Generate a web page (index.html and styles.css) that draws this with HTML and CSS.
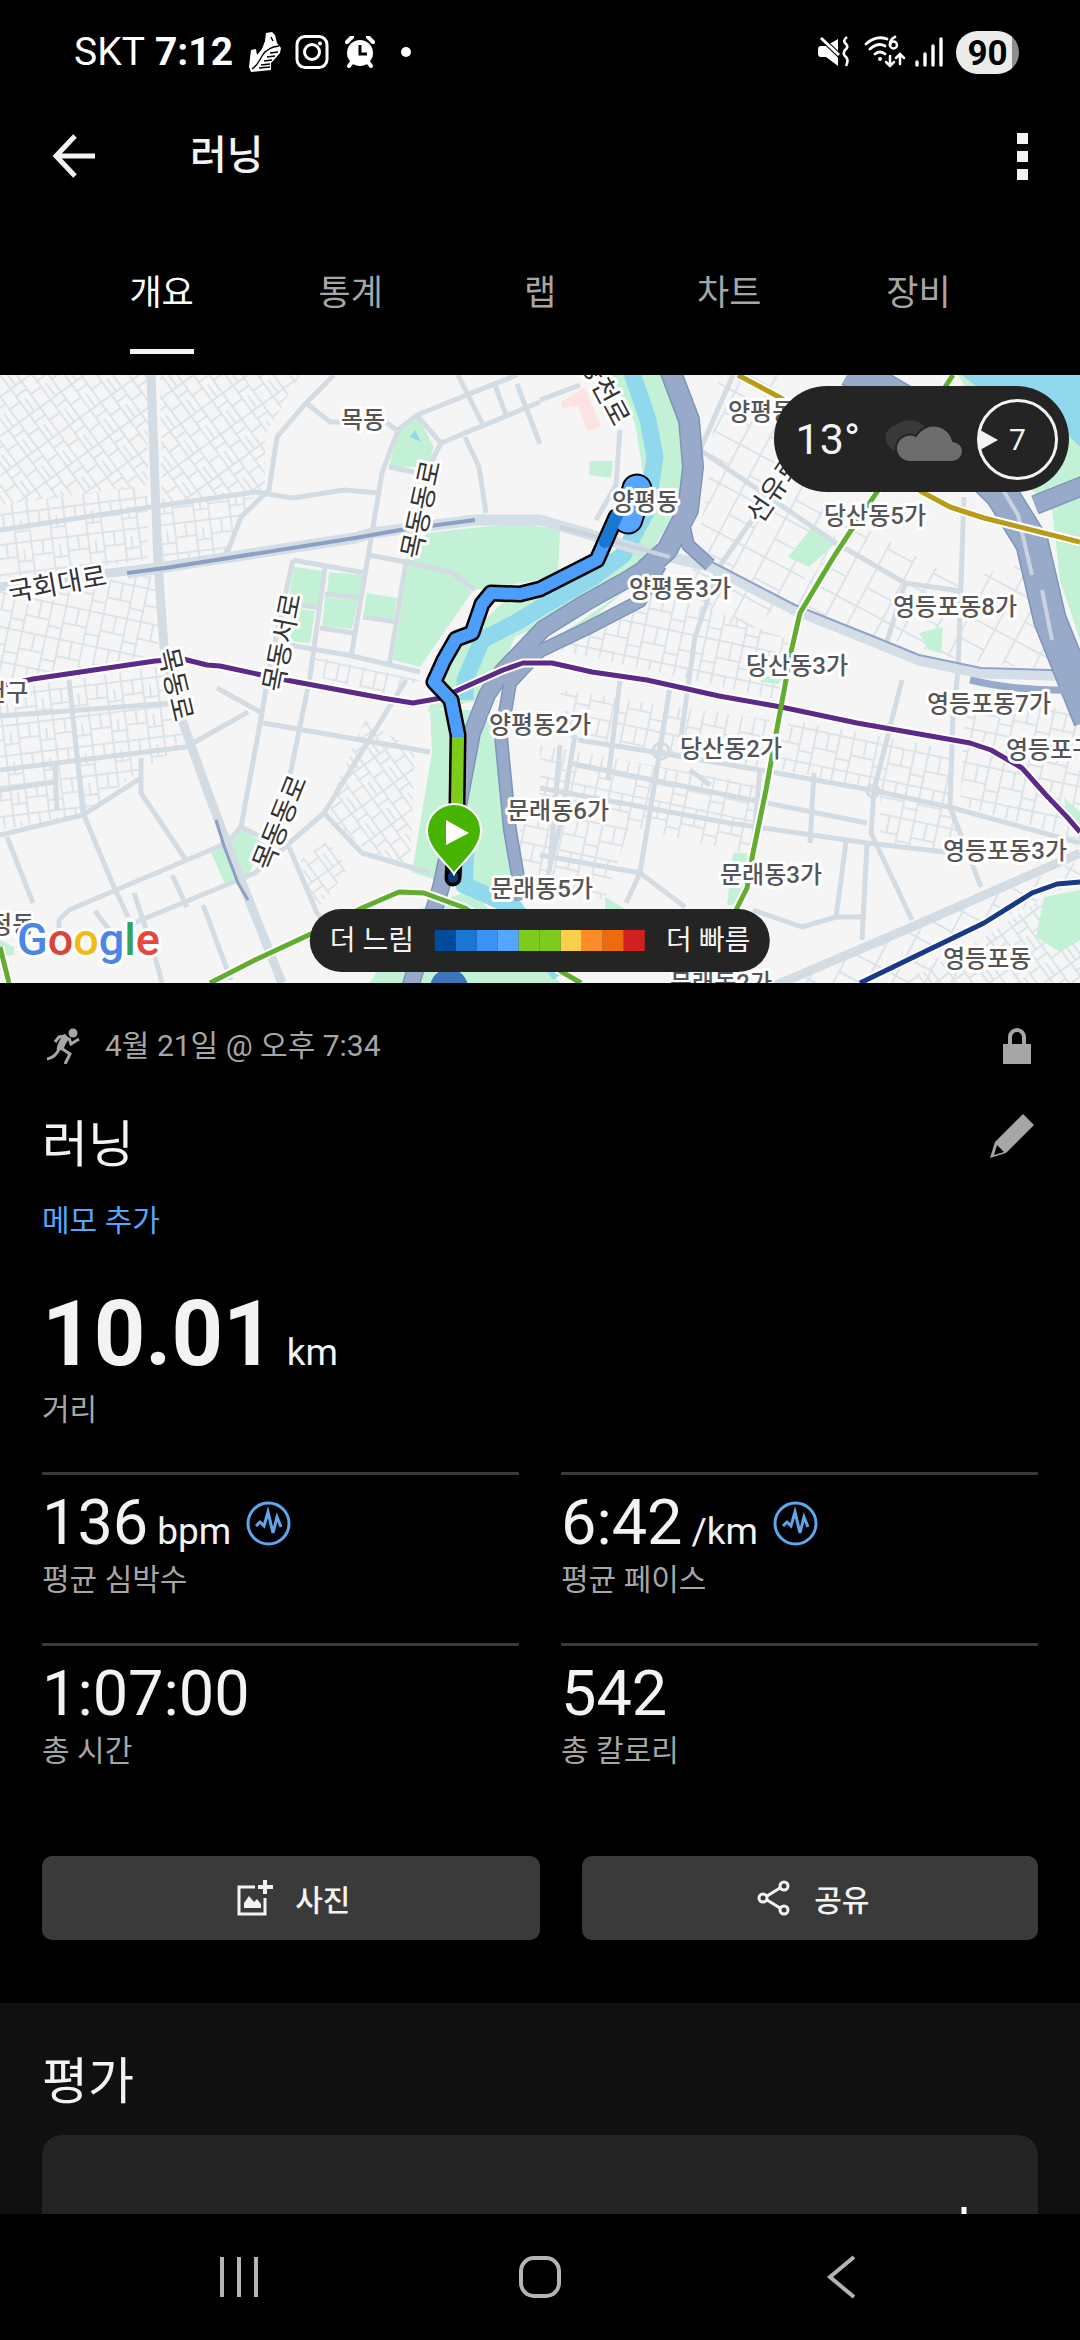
FILE: index.html
```html
<!DOCTYPE html>
<html lang="ko">
<head>
  <meta charset="UTF-8">
  <meta name="viewport" content="width=device-width, initial-scale=1.0">
  <title>러닝</title>

  <link rel="stylesheet" href="styles.css">
</head>
<body>
  <div class="screen">
    <div class="status">
      <div class="status-left">
        <span>SKT</span>
        <b>7:12</b>
        <svg class="status-shoe" width="32" height="40" viewBox="0 0 32 40" fill="#fff">
          <path d="M17 1l6-1 3 3 2 8 4 5-1 5-7 8-2 2v7L2 40 0 35l1-9 1-8 5-1 1 6 5-6 3-8z"/>
          <path d="M3 37c6-4 7-8 10-13s7-9 17-10M21 21l8-1M18 25l8-1M15 29l8-1M12 33l9-1M10 36l11-1M22 5l2 4" fill="none" stroke="#000" stroke-width="1.4"/>
        </svg>
        <svg class="status-insta" width="34" height="36" viewBox="0 0 34 36" fill="none" stroke="#fff" stroke-width="3">
          <rect x="2" y="2.500" width="30" height="31" rx="8"/>
          <circle cx="17" cy="18" r="7.500"/>
          <circle cx="25" cy="9.500" r="2" fill="#fff" stroke="none"/>
        </svg>
        <svg class="status-alarm" width="30" height="32" viewBox="0 0 30 32">
          <circle cx="15" cy="17" r="13" fill="#fff"/>
          <path d="M2 6l5-5M28 6l-5-5M7 26l-3 4M23 26l3 4" stroke="#fff" stroke-width="4" stroke-linecap="round"/>
          <path d="M15 9v9h7" fill="none" stroke="#000" stroke-width="3"/>
        </svg>
        <i class="status-dot"></i>
      </div>
      <div class="status-right">
        <svg width="32" height="32" viewBox="0 0 32 32">
          <path d="M2 10h6L20 3v27L8 21H2q-2-1-2-3v-5q0-2 2-3z" fill="#fff"/>
          <path d="M1 0l23 22" stroke="#000" stroke-width="5"/>
          <path d="M3 2l18 17" stroke="#fff" stroke-width="3"/>
          <path d="M29 1q-5 4-1 7 3 3-1 6-3 4 1 7 3 3 0 9" fill="none" stroke="#fff" stroke-width="2.600"/>
        </svg>
        <svg class="status-wifi" width="42" height="34" viewBox="0 0 42 34" fill="none" stroke="#fff" stroke-width="2.800" stroke-linecap="round">
          <path d="M2 9Q12 0 23 4M6 14Q14 7 21 11M11 19q5-4 10 0"/>
          <circle cx="16" cy="24" r="2" fill="#fff" stroke="none"/>
          <path d="M31 2q-5 2-5 8" />
          <circle cx="29.500" cy="10" r="3.500" stroke-width="2.500"/>
          <path d="M26 21v9m-4-3l4 4 4-4M36 29v-9m-4 3l4-4 4 4" stroke-width="2.500"/>
        </svg>
        <svg width="30" height="32" viewBox="0 0 30 32" stroke="#fff" stroke-width="3.400" stroke-linecap="round">
          <path d="M3 26v3M11 18v11M19 10v19M27 3v26"/>
        </svg>
        <span class="battery">90</span>
      </div>
    </div>

    <header class="appbar">
      <button class="icon-btn" aria-label="뒤로">
        <svg width="44" height="44" viewBox="0 0 44 44" fill="none" stroke="#f3f3f3" stroke-width="5">
          <path d="M43 22H5M23 2L4 22l19 20"/>
        </svg>
      </button>
      <h1 class="appbar-title">러닝</h1>
      <button class="icon-btn more" aria-label="더보기"><i></i><i></i><i></i></button>
    </header>

    <nav class="tabs">
      <a class="tab active" href="#overview">개요</a>
      <a class="tab" href="#stats">통계</a>
      <a class="tab" href="#laps">랩</a>
      <a class="tab" href="#charts">차트</a>
      <a class="tab" href="#gear">장비</a>
    </nav>

    <main class="content" id="overview">
      <section class="map">
        <svg class="map-canvas" viewBox="0 375 1080 608" preserveAspectRatio="xMidYMid slice">
          <defs>
            <pattern id="blocksA" width="26" height="32" patternUnits="userSpaceOnUse" patternTransform="rotate(-36)">
              <path d="M0 1h26M0 17h14M1 0v32M14 1v31M14 10h12M20 17v15" class="lane"/>
            </pattern>
            <pattern id="blocksB" width="36" height="30" patternUnits="userSpaceOnUse" patternTransform="rotate(-7)">
              <path d="M0 1h36M0 15h22M1 0v30M12 1v14M22 1v29M22 20h14M29 8v12" class="lane"/>
            </pattern>
            <pattern id="blocksC" width="38" height="34" patternUnits="userSpaceOnUse" patternTransform="rotate(12)">
              <path d="M0 1h38M0 18h25M1 0v34M14 1v17M25 1v33M25 24h13" class="lane"/>
            </pattern>
            <pattern id="blocksD" width="52" height="44" patternUnits="userSpaceOnUse" patternTransform="rotate(28)">
              <path d="M0 1h52M0 24h30M1 0v44M30 1v43" class="lane"/>
            </pattern>
          </defs>

          <rect y="375" width="1080" height="608" fill="#f6f5f6"/>

          <!-- side streets -->
          <path d="M0 375h148v110L0 505z" fill="url(#blocksA)"/>
          <path d="M0 505l148-20v75L0 580z" fill="url(#blocksB)"/>
          <path d="M160 375h140l-35 60v55l-103 15z" fill="url(#blocksA)"/>
          <path d="M160 508l95-14-30 60-62 10z" fill="url(#blocksB)"/>
          <path d="M0 590l158-15v80L0 680z" fill="url(#blocksC)"/>
          <path d="M0 690l172-25 12 80-50 30-50 40-84 15z" fill="url(#blocksB)"/>
          <path d="M365 720l50 30-5 115-45-15-40-38z" fill="url(#blocksA)"/>
          <path d="M300 860l28-20 20 30-32 40z" fill="url(#blocksA)"/>
          <path d="M310 655l110 25-30 15-80-20z" fill="url(#blocksC)"/>
          <path d="M718 375h60l60 170-90 90-60-40 20-110z" fill="url(#blocksD)"/>
          <path d="M850 520l110 60 80-20 10 110-90-10-170-50z" fill="url(#blocksD)"/>
          <path d="M560 650l100-60 130 50-10 60-220-50z" fill="url(#blocksC)"/>
          <path d="M560 690l210 30-10 50-190-30z" fill="url(#blocksC)"/>
          <path d="M790 720l165 30-5 55-180-38z" fill="url(#blocksC)"/>
          <path d="M540 745l220 40-10 70-210-50z" fill="url(#blocksC)"/>
          <path d="M880 795l70 15 20 50-90-15z" fill="url(#blocksC)"/>
          <path d="M965 700l115 10v130l-120-35z" fill="url(#blocksC)"/>
          <path d="M520 810l110 15-25 75-85-10z" fill="url(#blocksC)"/>
          <path d="M900 935l180-75v20L900 970z" fill="url(#blocksD)"/>
          <path d="M840 960l60-25 80 48H780z" fill="url(#blocksD)"/>
          <path d="M980 940l60-40 40 50v33H900z" fill="url(#blocksA)"/>

          <!-- parks -->
          <g fill="#c3f1d5">
            <path d="M418 417l16 30-7 20h-38l9-34z"/>
            <path d="M294 567l30 4-7 36-29-4zM329 572l33 3-2 22-33-4zM325 597l33 3-6 29-30-3zM299 609l16 2-5 32-21-2zM367 593l30 5-3 21-31-2z"/>
            <path d="M408 565l43 8 21 19-52 75-27-7z"/>
            <path d="M427 533l90-10 43 7-2 42-18 8-65 10-24-17-45-13z"/>
            <path d="M210 850l31-22 21 15-14 34-24 5z"/>
            <path d="M812 527l24 16-27 24-21-10zM919 633l24-6-2 26-12-3zM590 461h23l-2 17-22-3z"/>
            <path d="M1044 897l36-7v50l-20 12-24-15z"/>
            <path d="M733 853h14l-5 52h-15zM0 940l14 7v8l-14 2zM605 897l20 12h-20z"/>
            <path d="M763 676l20 2-5 6-18-2z"/>
            <path d="M611 375h52l20 50 4 40-12 50-40 60-50 32-70 30-25 60-62 15 15-50 60-60 60-14 75-55 5-60-8-50z"/>
            <path d="M430 710h60l4 30 18 142-40 10-60-20 20-120z"/>
            <path d="M470 890l80 80 10 13H370l40-70z"/>
            <path d="M958 375h30l92 60v205l-20-60-8-70-30-30z"/>
            <path d="M1064 798l16 14v18l-12-8z"/>
            <path d="M626 590l-40 34-36 18z"/>
          </g>
          <path d="M561 402l24-15 16 40-13 4-10-25-16 2z" fill="#fde3e1"/>

          <!-- stream and river -->
          <g fill="none" stroke="#90d9ec" stroke-width="17" stroke-linejoin="round">
            <path d="M631 370l17 50 7 37-8 53-24 45-31 23-52 30-23 14-35 18-17 40v20"/>
            <path d="M466 850l-2 35 50 22 46 68"/>
          </g>
          <path d="M962 375h118v72l-18-18-20 10z" fill="#90d9ec"/>
          <path d="M410 437l5-7 6 12z" fill="#90d9ec"/>

          <!-- main streets -->
          <g class="road">
            <path d="M0 530l151-23 104-15 38 6 51-8 35 3"/>
            <path d="M334 375l-28 28-29 34-8 53-28 27-14 36M306 403l24 19h20M383 420l15 11"/>
            <path d="M517 375l-100 40-19 15-16 43-14 84-17 100M540 402l-99 41-18 35M458 375l24 48M418 417l23 26M465 437l14 30 7 46M495 385l11 30M517 384l23 60"/>
            <path d="M389 467l25 5M368 555l38 7 45 10 24 18M406 562l-17 105M293 560l72 13M293 560l-24 110-7 43-21 114M325 567l-15 110-4 20-17 83"/>
            <path d="M289 603l30 5M325 594l36 4M363 617l34 5M320 628l34 5M289 645l59 10 72 17"/>
            <path d="M0 770l186-23 62-35M0 835l83-20 58-37M141 758v35l45 67"/>
            <path d="M59 935v-15l10-10 158-67 14-16 20 10M134 923l121-50 69-60 82-133M263 723l167 29"/>
            <path d="M7 837l26 66M69 680l14 133 31 74 14 30M172 875l15 32M134 893l20 60 8 30M203 905l28 75M324 813l38 40 68 20M289 847l28 66 20 20M262 713l-45-25"/>
            <path d="M0 716l186-14M0 790l55-8M55 765l2 45M95 911l15 20"/>
            <path d="M540 788l189 35 138 20 86 10M578 740l76 12 106 18 111 20 82 18 127 35"/>
            <path d="M671 680l-11 70-20 123-14 30M902 680l-28 110-3 43 41 87M953 713l-3 94 31 80"/>
            <path d="M540 855l100 18 45 34M867 843l-5 97M753 910l49 17 34-10h26M569 763l133 27 165 33M836 917l10-75M810 843l4-70"/>
            <path d="M700 450l136 93 69 40 55 8M733 375l-33 75M754 517l-35 50-24 70-14 100M905 583l-20 65"/>
            <path d="M964 497l-6 173-5 50M540 400l40-15M620 430l-4 55-20 35"/>
            <path d="M575 735l-15 90-18 75M620 680l-12 100M550 865l10-120M690 770l20 15M760 770l-10 110"/>
          </g>
          <g class="road wide">
            <path d="M151 375l7 188 6 84 18 73 25 70 34 90 41 103"/>
            <path d="M760 992l152-65 168-74"/>
            <path d="M0 587l158-20"/>
          </g>
          <circle cx="661" cy="751" r="8" class="junction"/>
          <circle cx="873" cy="791" r="6" class="junction"/>

          <!-- expressways -->
          <g class="line">
            <path d="M127 573l38-6 190-29 17-5 103-13h65l45 13 55 17 72 17 83 43 75 30 49 20 62 13 99 3" stroke="#d3dee6" stroke-width="11"/>
            <path d="M127 573l38-5 190-30 45-8 75-10" stroke="#8d9fc2" stroke-width="4"/>
            <path d="M712 562l83 43 75 30 49 20 62 13 99 3" stroke="#8fa4c8" stroke-width="2"/>
            <path d="M216 820l8 26 14 37 10 17" stroke="#8d9fc2" stroke-width="3"/>
          </g>
          <g class="line" stroke="#7f94bb">
            <path d="M670 370l19 50 4 47-5 43-21 40-22 20" stroke-width="22"/>
            <path d="M650 565l-22 14-43 24-42 26-40 42-16 24-15 38-14 74-17 80-34 110" stroke-width="18"/>
            <path d="M678 500l10 45 22 20" stroke-width="14"/>
            <path d="M660 565l-20 36-54 28-46 22-30 32-9 54 9 93 12 70" stroke-width="14"/>
            <path d="M850 370l60 35 91 88 31 50 18 77 20 50 20 50" stroke-width="34"/>
            <path d="M1085 485l-50 20" stroke-width="20"/>
          </g>
          <g class="line" stroke="#98aac9">
            <path d="M670 370l19 50 4 47-5 43-21 40-22 20" stroke-width="19"/>
            <path d="M650 565l-22 14-43 24-42 26-40 42-16 24-15 38-14 74-17 80-34 110" stroke-width="15"/>
            <path d="M678 500l10 45 22 20" stroke-width="11"/>
            <path d="M660 565l-20 36-54 28-46 22-30 32-9 54 9 93 12 70" stroke-width="11"/>
            <path d="M850 370l60 35 91 88 31 50 18 77 20 50 20 50" stroke-width="31"/>
            <path d="M1085 485l-50 20" stroke-width="17"/>
            <path d="M970 680q50 12 110 10" stroke-width="7"/>
          </g>
          <path class="line" d="M1003 490l15 25 14 60M1042 590l10 50M560 527l110 30" stroke="#c8d3e0" stroke-width="4"/>

          <!-- subway lines, white casing first -->
          <g class="line" stroke="#fff" stroke-width="9">
            <path d="M0 686l33-7 122-18 28-2 24 6 13 1 37 8 29 6 96 18 31 5 28-5 24-11 38-17 20-7h29l40 9 55 8 72 16 62 11 76 16 113 20 21 7 31 18 24 27 21 22 13 15"/>
            <path d="M953 375l-76 117-27 40-17 26-33 55-9 39-5 28-8 43-12 67-13 63-6 35-11 22"/>
            <path d="M581 983l-19-11-97-64-41-15-25-1-37 16-49 25-58 27-45 23M0 947l9 36"/>
            <path d="M738 375l43 23 141 94 28 15 34 11 96 24"/>
            <path d="M860 983l124-60 48-30 25-9 23-2"/>
          </g>
          <g class="line" stroke-width="5">
            <path d="M0 686l33-7 122-18 28-2 24 6 13 1 37 8 29 6 96 18 31 5 28-5 24-11 38-17 20-7h29l40 9 55 8 72 16 62 11 76 16 113 20 21 7 31 18 24 27 21 22 13 15" stroke="#5c2a86"/>
            <path d="M953 375l-76 117-27 40-17 26-33 55-9 39-5 28-8 43-12 67-13 63-6 35-11 22" stroke="#62ad30"/>
            <path d="M581 983l-19-11-97-64-41-15-25-1-37 16-49 25-58 27-45 23M0 947l9 36" stroke="#62ad30"/>
            <path d="M738 375l43 23 141 94 28 15 34 11 96 24" stroke="#b89c18"/>
            <path d="M860 983l124-60 48-30 25-9 23-2" stroke="#183a86"/>
          </g>
          <circle cx="449" cy="988" r="19" fill="#3d75bb"/>

          <!-- recorded route -->
          <g class="line" stroke-linecap="round">
            <path d="M637 489l-9 30" stroke="#000" stroke-width="31"/>
            <path d="M616 517l-19 43-57 29-20 5-29-1-9 11-10 29-16 6-12 21-10 22 17 18 7 35-1 72-4 71" stroke="#000" stroke-width="17"/>
            <path d="M637 489l-9 30" stroke="#54a6ff" stroke-width="27"/>
            <path d="M616 517l-19 43-57 29-20 5-29-1-9 11-10 29-16 6-12 21-10 22 17 18 7 35" stroke="#4b9ffa" stroke-width="12"/>
            <path d="M618 513l-13 29" stroke="#1976d2" stroke-width="12"/>
            <path d="M458 737l-1 70" stroke="#7ecb20" stroke-width="12" stroke-linecap="butt"/>
            <path d="M453 876v2" stroke="#0b3b76" stroke-width="10"/>
          </g>
          <path d="M454 874c-3-7-27-24-27-43a27 27 0 0 1 54 0c0 19-24 36-27 43z" fill="#46b400" stroke="#fff" stroke-width="2"/>
          <path d="M446 820v25l23-12z" fill="#fff"/>

          <g class="place">
            <text x="341" y="428">목동</text>
            <text x="728" y="420">양평동4가</text>
            <text x="612" y="510">양평동</text>
            <text x="629" y="597">양평동3가</text>
            <text x="824" y="524">당산동5가</text>
            <text x="746" y="674">당산동3가</text>
            <text x="893" y="615">영등포동8가</text>
            <text x="927" y="712">영등포동7가</text>
            <text x="1006" y="758">영등포구</text>
            <text x="489" y="733">양평동2가</text>
            <text x="680" y="757">당산동2가</text>
            <text x="507" y="819">문래동6가</text>
            <text x="491" y="897">문래동5가</text>
            <text x="720" y="883">문래동3가</text>
            <text x="943" y="859">영등포동3가</text>
            <text x="943" y="967">영등포동</text>
            <text x="670" y="991">문래동2가</text>
            <text x="-38" y="701">양천구</text>
            <text x="-32" y="933">신정동</text>
          </g>
          <g class="street">
            <text transform="translate(10 602) rotate(-10)">국회대로</text>
            <text transform="translate(420 560) rotate(-78)">목동동로</text>
            <text transform="translate(282 693) rotate(-79)">목동서로</text>
            <text transform="translate(270 872) rotate(-68)">목동동로</text>
            <text transform="translate(158 650) rotate(77)">목동로</text>
            <text transform="translate(579 362) rotate(62)">양천로</text>
            <text transform="translate(761 525) rotate(-56)">선유로</text>
          </g>
          <text class="google" x="17" y="955"><tspan fill="#4c85e8">G</tspan><tspan fill="#db4437">o</tspan><tspan fill="#f4b912">o</tspan><tspan fill="#4c85e8">g</tspan><tspan fill="#34a35a">l</tspan><tspan fill="#e5483d">e</tspan></text>
        </svg>

        <div class="weather">
          <span class="weather-temp">13°</span>
          <svg width="84" height="48" viewBox="0 0 84 48">
            <path d="M14 35a13 13 0 0 1 2-25 19 16 0 0 1 29 2l4 22z" fill="#393939"/>
            <path d="M30 47a14 14 0 0 1-14-14 14 14 0 0 1 20-12 20 20 0 0 1 37 5c6 1 10 5 10 10a11 11 0 0 1-11 11z" fill="#6d6d6d" stroke="#242424" stroke-width="2"/>
          </svg>
          <span class="wind">7</span>
        </div>

        <div class="legend">
          <span>더 느림</span>
          <div class="legend-scale">
            <i class="c1"></i><i class="c2"></i><i class="c3"></i><i class="c4"></i><i class="c5"></i>
            <i class="c5"></i><i class="c6"></i><i class="c7"></i><i class="c8"></i><i class="c9"></i>
          </div>
          <span>더 빠름</span>
        </div>
      </section>

      <section class="activity">
        <div class="meta">
          <svg width="34" height="36" viewBox="0 0 34 36" fill="none" stroke="#a6a6a6">
            <circle cx="26" cy="5" r="4.500" fill="#a6a6a6" stroke="none"/>
            <path d="M20 8q-6 7-7 14" stroke-width="7"/>
            <path d="M19 8l-7 1-4 5M22 10l2 6 8-5M14 20l9 6-5 10" stroke-width="3"/>
            <path d="M12 21q-3 8-12 10" stroke-width="3"/>
          </svg>
          <time>4월 21일 @ 오후 7:34</time>
          <svg class="lock" width="28" height="36" viewBox="0 0 28 36">
            <path d="M0 16h28v20H0z" fill="#a6a6a6"/>
            <path d="M7 17V9a7 7 0 0 1 14 0v8" fill="none" stroke="#a6a6a6" stroke-width="4"/>
          </svg>
        </div>

        <div class="heading">
          <h2>러닝</h2>
          <button class="icon-btn" aria-label="이름 수정">
            <svg width="44" height="44" viewBox="0 0 44 44">
              <path d="M33 0l11 11-28 28L0 44l5-16z" fill="#a6a6a6"/>
              <path d="M7 31l7 7-10 3z" fill="#000"/>
            </svg>
          </button>
        </div>
        <a class="memo" href="#memo">메모 추가</a>

        <div class="distance">
          <p class="value"><strong>10.01</strong> <span class="unit">km</span></p>
          <p class="label">거리</p>
        </div>

        <div class="stats">
          <div class="stat">
            <p class="value">136 <span class="unit">bpm</span>
              <svg class="pulse" width="45" height="45" viewBox="0 0 45 45" fill="none" stroke="#5ea6ee" stroke-width="3">
                <circle cx="22.500" cy="22.500" r="20.500"/>
                <path d="M10 25l4-4 4 4 4-14 5 21 4-16 4 10"/>
              </svg>
            </p>
            <p class="label">평균 심박수</p>
          </div>
          <div class="stat">
            <p class="value">6:42 <span class="unit">/km</span>
              <svg class="pulse" width="45" height="45" viewBox="0 0 45 45" fill="none" stroke="#5ea6ee" stroke-width="3">
                <circle cx="22.500" cy="22.500" r="20.500"/>
                <path d="M10 25l4-4 4 4 4-14 5 21 4-16 4 10"/>
              </svg>
            </p>
            <p class="label">평균 페이스</p>
          </div>
          <div class="stat">
            <p class="value">1:07:00</p>
            <p class="label">총 시간</p>
          </div>
          <div class="stat">
            <p class="value">542</p>
            <p class="label">총 칼로리</p>
          </div>
        </div>

        <div class="actions">
          <button class="btn">
            <svg width="36" height="36" viewBox="0 0 36 36" fill="none" stroke="#f3f3f3">
              <path d="M18 7H2v27h26V18" stroke-width="3"/>
              <path d="M28 0v14M21 7h15" stroke-width="4"/>
              <path d="M7 28v-5l5-7 5 6 3-3 4 5v4z" fill="#f3f3f3" stroke="none"/>
            </svg>
            사진
          </button>
          <button class="btn">
            <svg width="36" height="36" viewBox="0 0 36 36" fill="none" stroke="#f3f3f3" stroke-width="3">
              <circle cx="7" cy="18" r="4"/>
              <circle cx="28" cy="6" r="4"/>
              <circle cx="28" cy="30" r="4"/>
              <path d="M11 16l13-8M11 20l13 8"/>
            </svg>
            공유
          </button>
        </div>
      </section>

      <section class="rating">
        <h2>평가</h2>
        <div class="rating-card">
          <button class="icon-btn" aria-label="평가 추가">
            <svg width="40" height="40" viewBox="0 0 40 40" stroke="#fff" stroke-width="5">
              <path d="M20 0v40M0 20h40"/>
            </svg>
          </button>
        </div>
      </section>
    </main>

    <div class="navbar">
      <button class="icon-btn" aria-label="최근 앱">
        <svg width="44" height="44" viewBox="0 0 44 44" fill="none" stroke="#b4b4b4" stroke-width="4">
          <path d="M5 2v40M22 2v40M39 2v40"/>
        </svg>
      </button>
      <button class="icon-btn" aria-label="홈">
        <svg width="44" height="44" viewBox="0 0 44 44" fill="none" stroke="#b4b4b4" stroke-width="4">
          <rect x="3" y="3" width="38" height="38" rx="13"/>
        </svg>
      </button>
      <button class="icon-btn" aria-label="뒤로 가기">
        <svg width="44" height="44" viewBox="0 0 44 44" fill="none" stroke="#b4b4b4" stroke-width="4">
          <path d="M35 2L11 22l24 20"/>
        </svg>
      </button>
    </div>
  </div>
</body>
</html>
```
FILE: styles.css
```css
* { margin: 0; padding: 0; box-sizing: border-box; }

html,
body { height: 100%; }

body {
  background-color: #000;
  color: #f3f3f3;
  font-family: Roboto, "Noto Sans CJK KR", sans-serif;
  font-size: 30px;
  line-height: 40px;
}

svg { display: block; flex: none; }
a { color: inherit; text-decoration: none; }

.screen {
  height: 100vh;
  display: flex;
  flex-direction: column;
  overflow: hidden;
}

.icon-btn {
  border: 0;
  background: none;
  color: inherit;
}

/* status bar */
.status {
  height: 104px;
  flex: none;
  display: flex;
  justify-content: space-between;
  align-items: center;
  padding: 0 61px 0 74px;
  color: #fff;
  font-size: 39px;
}
.status-left,
.status-right {
  display: flex;
  align-items: center;
}
.status-left b { margin-left: 10px; }
.status-shoe { margin-left: 16px; }
.status-insta { margin-left: 14px; }
.status-alarm { margin-left: 16px; }
.status-dot {
  width: 10px;
  height: 10px;
  margin-left: 26px;
  border-radius: 50%;
  background-color: #fff;
}
.status-right { gap: 8px; }
.status-wifi { margin-left: 6px; }
.battery {
  width: 63px;
  height: 43px;
  margin-left: 4px;
  border-radius: 22px;
  background: linear-gradient(to right, #ebebeb 56px, #8d8d8d 56px);
  color: #000;
  font-size: 35px;
  font-weight: 700;
  line-height: 45px;
  text-align: center;
}

/* app bar */
.appbar {
  height: 104px;
  flex: none;
  display: flex;
  align-items: center;
  padding: 0 52px;
}
.appbar-title {
  flex: 1;
  margin-left: 94px;
  font-size: 40px;
  font-weight: 500;
}
.more {
  display: flex;
  flex-direction: column;
  gap: 7px;
}
.more i {
  width: 11px;
  height: 11px;
  background-color: #f3f3f3;
}

.tabs {
  flex: none;
  display: flex;
  padding: 62px 67px 21px;
  font-size: 35px;
  line-height: 48px;
  color: #a6a6a6;
}
.tab {
  flex: 1;
  display: flex;
  flex-direction: column;
  align-items: center;
}
.tab::after {
  content: "";
  width: 64px;
  height: 5px;
  margin-top: 31px;
}
.active { color: #fff; }
.active::after { background-color: #f3f3f3; }

.content {
  flex: 1;
  min-height: 0;
  overflow: hidden;
}

/* map */
.map {
  position: relative;
  height: 608px;
}
.map-canvas {
  width: 100%;
  height: 100%;
}
.line { fill: none; stroke-linejoin: round; }
.lane { fill: none; stroke: #dce4e9; stroke-width: 2; }
.road { fill: none; stroke: #d3dce2; stroke-width: 5; stroke-linejoin: round; }
.wide { stroke-width: 9; }
.junction { fill: none; stroke: #d3dce2; stroke-width: 3; }
.place,
.street,
.google {
  paint-order: stroke;
  stroke: #fff;
  stroke-width: 6px;
  stroke-linejoin: round;
}
.place { fill: #555; font-size: 24px; font-weight: 500; }
.street { fill: #333; font-size: 27px; }
.google { font-size: 45px; font-weight: 500; }

.weather {
  position: absolute;
  top: 11px;
  right: 11px;
  height: 106px;
  display: flex;
  align-items: center;
  padding: 0 11px 0 22px;
  border-radius: 53px;
  background-color: #242424;
}
.weather-temp {
  margin-right: 20px;
  font-size: 43px;
}
.wind {
  position: relative;
  width: 81px;
  height: 81px;
  margin-left: 13px;
  border: 3px solid #f3f3f3;
  border-radius: 50%;
  line-height: 75px;
  text-align: center;
}
.wind::before {
  content: "";
  position: absolute;
  left: 0;
  top: 28px;
  border: 10px solid transparent;
  border-left: 18px solid #f3f3f3;
  border-right: 0;
}

.legend {
  position: absolute;
  bottom: 11px;
  left: 50%;
  transform: translateX(-50%);
  height: 63px;
  display: flex;
  align-items: center;
  gap: 21px;
  padding: 0 20px;
  border-radius: 32px;
  background-color: #242424;
  font-size: 28px;
  white-space: nowrap;
}
.legend-scale { display: flex; }
.legend-scale i { width: 21px; height: 21px; }
.c1 { background-color: #004c9b; }
.c2 { background-color: #1976d2; }
.c3 { background-color: #3b92f5; }
.c4 { background-color: #54a6ff; }
.c5 { background-color: #7ecb20; }
.c6 { background-color: #f9cf4c; }
.c7 { background-color: #fb8c28; }
.c8 { background-color: #ee6a0e; }
.c9 { background-color: #d22020; }

/* activity */
.activity { padding: 42px 42px 63px; }
.meta {
  height: 42px;
  display: flex;
  align-items: center;
  gap: 24px;
  padding: 0 7px 0 5px;
  color: #a6a6a6;
}
.lock { margin-left: auto; }
.heading {
  display: flex;
  justify-content: space-between;
  align-items: flex-start;
  margin-top: 47px;
  padding-right: 4px;
}
h2 {
  font-size: 50px;
  font-weight: 400;
  line-height: 62px;
}
.memo {
  display: block;
  margin-top: 25px;
  color: #54a6ff;
}
.value {
  display: flex;
  align-items: baseline;
  font-size: 63px;
  line-height: 64px;
}
.unit {
  margin-left: 9px;
  font-size: 37px;
  line-height: 40px;
}
.label {
  margin-top: 5px;
  color: #a6a6a6;
}
.distance { margin-top: 44px; }
.distance .value { line-height: 100px; }
.distance strong {
  font-size: 90px;
  font-weight: 700;
}
.distance .unit {
  margin-left: 12px;
  line-height: 40px;
}
.stats {
  display: grid;
  grid-template-columns: 1fr 1fr;
  gap: 43px 42px;
  margin-top: 42px;
}
.stat {
  padding-top: 16px;
  border-top: 3px solid #3a3a3a;
}
.pulse {
  align-self: center;
  margin-left: 15px;
}
.actions {
  display: grid;
  grid-template-columns: 12fr 11fr;
  gap: 42px;
  margin-top: 85px;
}
.btn {
  height: 84px;
  display: flex;
  justify-content: center;
  align-items: center;
  gap: 22px;
  padding-left: 6px;
  border: 0;
  border-radius: 10px;
  background-color: #3a3a3a;
  color: #f3f3f3;
  font-family: inherit;
  font-size: 30px;
  font-weight: 500;
}

.rating {
  padding: 48px 42px;
  background-color: #101010;
}
.rating-card {
  display: flex;
  justify-content: flex-end;
  margin-top: 22px;
  padding: 72px 54px;
  border-radius: 20px;
  background-color: #242424;
}

.navbar {
  height: 126px;
  flex: none;
  display: grid;
  grid-template-columns: 1fr 1fr 1fr;
  justify-items: center;
  align-items: center;
  padding: 0 88px;
  background-color: #000;
}
```
